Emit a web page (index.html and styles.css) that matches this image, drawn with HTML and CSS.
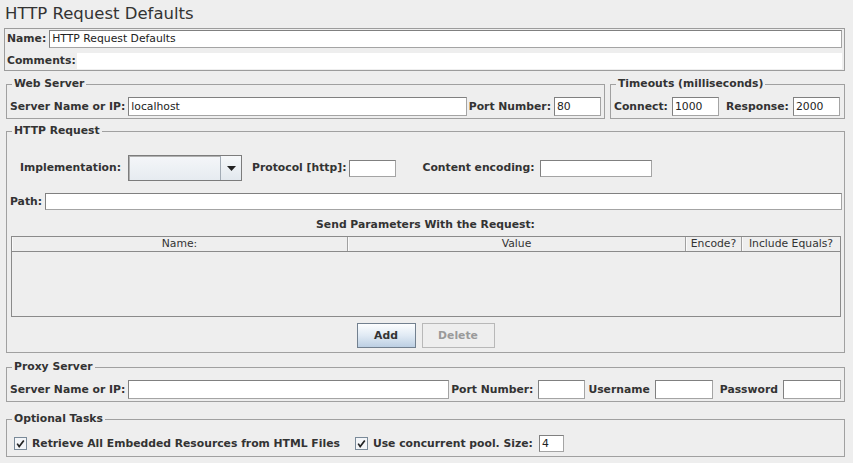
FILE: index.html
```html
<!DOCTYPE html>
<html>
<head>
<meta charset="utf-8">
<title>HTTP Request Defaults</title>
<link rel="stylesheet" href="styles.css">
</head>
<body>
<h1 class="title">HTTP Request Defaults</h1>

<div class="namebox">
  <div class="row">
    <span class="lbl">Name:</span>
    <div class="field grow h18 gap3">HTTP Request Defaults</div>
  </div>
  <div class="row comments-row">
    <span class="lbl">Comments:</span>
    <div class="field-plain grow"></div>
  </div>
</div>

<div class="server-row">
  <fieldset class="group web">
    <legend>Web Server</legend>
    <div class="gbody row">
      <span class="lbl">Server Name or IP:</span>
      <div class="field grow gap3">localhost</div>
      <span class="lbl after">Port Number:</span>
      <div class="field w47 gap3">80</div>
    </div>
  </fieldset>
  <fieldset class="group timeouts">
    <legend>Timeouts (milliseconds)</legend>
    <div class="gbody row">
      <span class="lbl">Connect:</span>
      <div class="field w47 gap4">1000</div>
      <span class="lbl after7">Response:</span>
      <div class="field w47 gap4">2000</div>
    </div>
  </fieldset>
</div>

<fieldset class="group http">
  <legend>HTTP Request</legend>
  <div class="row impl-row">
    <span class="lbl">Implementation:</span>
    <div class="combo">
      <div class="combo-text"></div>
      <div class="combo-btn">
        <svg width="9" height="5" viewBox="0 0 9 5"><path d="M0 0 H9 L4.5 5 Z" fill="#222"/></svg>
      </div>
    </div>
    <span class="lbl proto">Protocol [http]:</span>
    <div class="field w47 h17 gap3"></div>
    <span class="lbl enc">Content encoding:</span>
    <div class="field w112 h17 gap5"></div>
  </div>
  <div class="row path-row">
    <span class="lbl">Path:</span>
    <div class="field grow h17 gap3"></div>
  </div>
  <div class="params-title">Send Parameters With the Request:</div>
  <div class="table">
    <div class="thead">
      <div class="th c-name">Name:</div>
      <div class="th c-value">Value</div>
      <div class="th c-enc">Encode?</div>
      <div class="th c-eq">Include Equals?</div>
    </div>
    <div class="tbody"></div>
  </div>
  <div class="buttons">
    <button class="btn add" type="button">Add</button>
    <button class="btn del" type="button" disabled>Delete</button>
  </div>
</fieldset>

<fieldset class="group proxy">
  <legend>Proxy Server</legend>
  <div class="gbody row">
    <span class="lbl">Server Name or IP:</span>
    <div class="field grow gap3">&nbsp;</div>
    <span class="lbl after">Port Number:</span>
    <div class="field w47 gap5"></div>
    <span class="lbl after3">Username</span>
    <div class="field w58 gap5"></div>
    <span class="lbl after7">Password</span>
    <div class="field w58 gap5"></div>
  </div>
</fieldset>

<fieldset class="group tasks">
  <legend>Optional Tasks</legend>
  <div class="tbody-row row">
    <span class="check">
      <svg width="13" height="13" viewBox="0 0 13 13"><rect x="0.5" y="0.5" width="12" height="12" fill="#f3f5f8" stroke="#7a8a99"/><path d="M3.2 6.6 L5.2 9.6 L9.8 3.4" stroke="#222" stroke-width="1.7" fill="none"/></svg>
    </span>
    <span class="lbl cblabel">Retrieve All Embedded Resources from HTML Files</span>
    <span class="check second">
      <svg width="13" height="13" viewBox="0 0 13 13"><rect x="0.5" y="0.5" width="12" height="12" fill="#f3f5f8" stroke="#7a8a99"/><path d="M3.2 6.6 L5.2 9.6 L9.8 3.4" stroke="#222" stroke-width="1.7" fill="none"/></svg>
    </span>
    <span class="lbl cblabel">Use concurrent pool. Size:</span>
    <div class="field w25 h17 gap6">4</div>
  </div>
</fieldset>
</body>
</html>
```

FILE: styles.css
```css
* { box-sizing: border-box; }

html, body {
  margin: 0;
  padding: 0;
}

body {
  background: #eeeeee;
  width: 853px;
  height: 463px;
  overflow: hidden;
  font-family: "DejaVu Sans", "Noto Sans", sans-serif;
  font-size: 10.8px;
  color: #333333;
}

.title {
  margin: 0;
  padding-left: 5px;
  height: 28px;
  line-height: 28px;
  font-size: 16.5px;
  font-weight: normal;
  color: #333333;
}

.row {
  display: flex;
  align-items: center;
}

.lbl {
  font-weight: bold;
  white-space: nowrap;
  line-height: 14px;
}

.field {
  flex: none;
  background: #ffffff;
  border: 1px solid #a4a4a4;
  border-top-color: #808080;
  border-left-color: #808080;
  height: 19px;
  line-height: 17px;
  padding: 0 2px;
  white-space: nowrap;
  overflow: hidden;
  color: #222222;
}

.field-plain {
  background: #ffffff;
  height: 16px;
  margin-left: 1px;
}

.grow { flex: 1 1 auto; min-width: 0; }
.h18 { height: 18px; line-height: 16px; }
.h17 { height: 17px; line-height: 15px; }
.w25 { width: 25px; }
.w47 { width: 47px; }
.w58 { width: 58px; }
.w112 { width: 112px; }
.gap3 { margin-left: 3px; }
.gap4 { margin-left: 4px; }
.gap5 { margin-left: 5px; }
.gap6 { margin-left: 6px; }
.after { margin-left: 2px; }
.after3 { margin-left: 3px; }
.after7 { margin-left: 7px; }

/* Name / comments box */
.namebox {
  margin-left: 4px;
  width: 841px;
  border: 1px solid #9c9c9c;
  padding: 1px 2px;
}

.comments-row {
  margin-top: 5px;
}

/* Titled groups */
.group {
  margin: 0;
  padding: 0;
  border: 1px solid #a0a0a0;
  min-width: 0;
}

.group legend {
  margin-left: 5px;
  padding: 0 2px;
  font-weight: bold;
  line-height: 14px;
  color: #333333;
}

.gbody {
  padding: 6px 3px 2px 3px;
}

.server-row {
  display: flex;
  margin: 6px 0 0 6px;
  width: 839px;
}

.web { width: 599px; }
.timeouts { width: 235px; margin-left: 5px; }

.http,
.proxy,
.tasks {
  margin-left: 6px;
  width: 839px;
}

.http { margin-top: 5px; }
.proxy { margin-top: 7px; }
.tasks { margin-top: 10px; }

/* HTTP request */
.impl-row {
  margin-top: 17px;
  padding-left: 13px;
  height: 26px;
}

.combo {
  flex: none;
  display: flex;
  width: 114px;
  height: 26px;
  margin-left: 7px;
  border: 1px solid #7c7c7c;
  box-shadow: inset 1px 1px 0 #b0b0b0;
  background: linear-gradient(#f4f6f9, #e6ebf0);
}

.combo-text { flex: 1 1 auto; }

.combo-btn {
  width: 21px;
  border-left: 1px solid #a2abb5;
  display: flex;
  align-items: center;
  justify-content: center;
  background: linear-gradient(#f6f8fa, #e2e8ee);
}

.proto { margin-left: 10px; }
.enc { margin-left: 26px; }

.path-row {
  margin-top: 12px;
  padding: 0 2px 0 3px;
}

.params-title {
  margin-top: 8px;
  line-height: 14px;
  font-weight: bold;
  text-align: center;
}

.table {
  margin: 4px 3px 0 4px;
  height: 81px;
  border: 1px solid #8a8a8a;
  display: flex;
  flex-direction: column;
}

.thead {
  display: flex;
  height: 15px;
  border-bottom: 1px solid #8a8a8a;
}

.th {
  font-weight: normal;
  text-align: center;
  line-height: 14px;
  border-right: 1px solid #a0a0a0;
  box-shadow: inset 1px 0 0 #fafafa;
  color: #333333;
  white-space: nowrap;
}

.c-name { width: 336px; }
.c-value { width: 338px; }
.c-enc { width: 56px; }
.c-eq { flex: 1 1 auto; border-right: none; }

.tbody { flex: 1 1 auto; background: #eeeeee; }

.buttons {
  display: flex;
  justify-content: center;
  gap: 6px;
  margin-top: 6px;
  padding-bottom: 4px;
}

.btn {
  height: 25px;
  padding: 0;
  font-family: "DejaVu Sans", "Noto Sans", sans-serif;
  font-size: 10.8px;
  font-weight: bold;
  color: #333333;
  border: 1px solid #72808f;
  border-radius: 0;
  background: linear-gradient(#fdfeff, #e0eaf4 50%, #bccfe3);
}

.btn.add { width: 59px; }

.btn.del {
  width: 73px;
  color: #9a9a9a;
  border-color: #b8b8b8;
  background: #eeeeee;
}

/* Optional tasks */
.tbody-row {
  padding: 9px 3px 4px 7px;
  height: 30px;
}

.check {
  display: flex;
  flex: none;
  width: 13px;
  height: 13px;
}

.check.second { margin-left: 15px; }

.cblabel { margin-left: 5px; }
```
